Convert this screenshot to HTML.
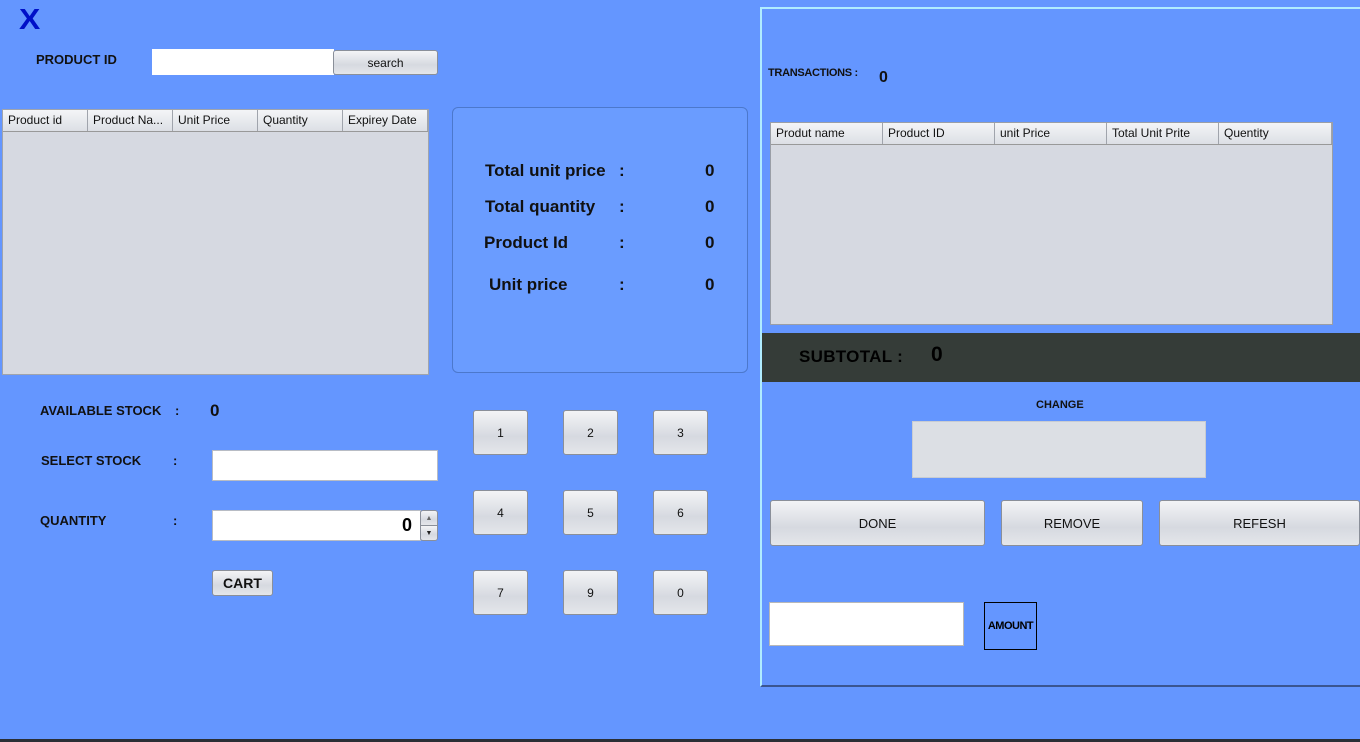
<!DOCTYPE html><html><head><style>
body{margin:0;width:1360px;height:742px;background:#6496ff;position:relative;overflow:hidden;font-family:"Liberation Sans",Arial,sans-serif;}
.a{position:absolute}
.b{font-weight:bold;color:#111}
.btn{position:absolute;border:1px solid #8a8f99;border-radius:3px;background:linear-gradient(#f3f4f6,#d6d9e0 60%,#e4e6ea);box-sizing:border-box;display:flex;align-items:center;justify-content:center;font-size:12px;color:#111}
.tf{position:absolute;background:#fff;border:1px solid #b8bcc4;box-sizing:border-box}
.hdr{position:absolute;display:flex;background:linear-gradient(#f4f5f7,#dcdfe5);border-bottom:1px solid #999;box-sizing:border-box}
.hdr div{border-right:1px solid #a0a4ac;box-sizing:border-box;font-size:12px;padding:3px 0 0 5px;white-space:nowrap;overflow:hidden;color:#111}
</style></head><body>
<div class="a" style="left:19px;top:4px;font-size:29px;font-weight:900;color:#0010c8;transform:scaleX(1.1);transform-origin:left">X</div>
<div class="a b" style="left:36px;top:52px;font-size:13px">PRODUCT ID</div>
<div class="tf" style="left:152px;top:49px;width:182px;height:26px;border:none"></div>
<div class="btn" style="left:333px;top:50px;width:105px;height:25px">search</div>

<div class="a" style="left:2px;top:109px;width:427px;height:266px;background:#d6d9e1;border:1px solid #a0a4ac;box-sizing:border-box"></div>
<div class="hdr" style="left:3px;top:110px;width:425px;height:22px">
<div style="width:85px">Product id</div><div style="width:85px">Product Na...</div><div style="width:85px">Unit Price</div><div style="width:85px">Quantity</div><div style="width:85px">Expirey Date</div></div>

<div class="a" style="left:452px;top:107px;width:296px;height:266px;background:#6a9cff;border:1px solid #4c78cc;border-radius:6px;box-sizing:border-box"></div>
<div class="a b" style="left:485px;top:161px;font-size:17px">Total unit price</div>
<div class="a b" style="left:485px;top:197px;font-size:17px">Total quantity</div>
<div class="a b" style="left:484px;top:233px;font-size:17px">Product Id</div>
<div class="a b" style="left:489px;top:275px;font-size:17px">Unit price</div>
<div class="a b" style="left:619px;top:161px;font-size:17px">:</div>
<div class="a b" style="left:619px;top:197px;font-size:17px">:</div>
<div class="a b" style="left:619px;top:233px;font-size:17px">:</div>
<div class="a b" style="left:619px;top:275px;font-size:17px">:</div>
<div class="a b" style="left:705px;top:161px;font-size:17px">0</div>
<div class="a b" style="left:705px;top:197px;font-size:17px">0</div>
<div class="a b" style="left:705px;top:233px;font-size:17px">0</div>
<div class="a b" style="left:705px;top:275px;font-size:17px">0</div>

<div class="a b" style="left:40px;top:403px;font-size:13px">AVAILABLE STOCK</div>
<div class="a b" style="left:175px;top:403px;font-size:13px">:</div>
<div class="a b" style="left:210px;top:401px;font-size:17px">0</div>
<div class="a b" style="left:41px;top:453px;font-size:13px">SELECT STOCK</div>
<div class="a b" style="left:173px;top:453px;font-size:13px">:</div>
<div class="a b" style="left:40px;top:513px;font-size:13px">QUANTITY</div>
<div class="a b" style="left:173px;top:513px;font-size:13px">:</div>
<div class="tf" style="left:212px;top:450px;width:226px;height:31px"></div>
<div class="tf" style="left:212px;top:510px;width:209px;height:31px"><span class="a b" style="right:8px;top:4px;font-size:18px;color:#000">0</span></div>
<div class="btn" style="left:420px;top:510px;width:18px;height:16px;font-size:7px;color:#666;border-radius:3px 3px 0 0">▲</div>
<div class="btn" style="left:420px;top:525px;width:18px;height:16px;font-size:7px;color:#222;border-radius:0 0 3px 3px">▼</div>
<div class="btn b" style="left:212px;top:570px;width:61px;height:26px;font-size:14px;font-weight:bold">CART</div>

<div class="btn" style="left:473px;top:410px;width:55px;height:45px">1</div>
<div class="btn" style="left:563px;top:410px;width:55px;height:45px">2</div>
<div class="btn" style="left:653px;top:410px;width:55px;height:45px">3</div>
<div class="btn" style="left:473px;top:490px;width:55px;height:45px">4</div>
<div class="btn" style="left:563px;top:490px;width:55px;height:45px">5</div>
<div class="btn" style="left:653px;top:490px;width:55px;height:45px">6</div>
<div class="btn" style="left:473px;top:570px;width:55px;height:45px">7</div>
<div class="btn" style="left:563px;top:570px;width:55px;height:45px">9</div>
<div class="btn" style="left:653px;top:570px;width:55px;height:45px">0</div>

<div class="a" style="left:760px;top:7px;width:602px;height:680px;border-top:2px solid #b0ecff;border-left:2px solid #b0ecff;border-bottom:2px solid #3a5590;box-sizing:border-box"></div>
<div class="a b" style="left:768px;top:67px;font-size:11px;letter-spacing:-0.3px">TRANSACTIONS :</div>
<div class="a b" style="left:879px;top:69px;font-size:16px">0</div>
<div class="a" style="left:770px;top:122px;width:563px;height:203px;background:#d6d9e1;border:1px solid #9a9ea6;box-sizing:border-box"></div>
<div class="hdr" style="left:771px;top:123px;width:561px;height:22px">
<div style="width:112px">Produt name</div><div style="width:112px">Product ID</div><div style="width:112px">unit Price</div><div style="width:112px">Total Unit Prite</div><div style="width:113px">Quentity</div></div>
<div class="a" style="left:762px;top:333px;width:598px;height:49px;background:#353c38"></div>
<div class="a b" style="left:799px;top:347px;font-size:17px;color:#000;letter-spacing:0.3px">SUBTOTAL :</div>
<div class="a b" style="left:931px;top:343px;font-size:21px;color:#000">0</div>
<div class="a b" style="left:1036px;top:399px;font-size:11px">CHANGE</div>
<div class="a" style="left:912px;top:421px;width:294px;height:57px;background:#dcdfe4;border:1px solid #c8ccd2;box-sizing:border-box"></div>
<div class="btn" style="left:770px;top:500px;width:215px;height:46px;font-size:13px">DONE</div>
<div class="btn" style="left:1001px;top:500px;width:142px;height:46px;font-size:13px">REMOVE</div>
<div class="btn" style="left:1159px;top:500px;width:201px;height:46px;font-size:13px">REFESH</div>
<div class="tf" style="left:769px;top:602px;width:195px;height:44px;border:1px solid #b8b8b8"></div>
<div class="a" style="left:984px;top:602px;width:53px;height:48px;border:1px solid #000;box-sizing:border-box;display:flex;align-items:center;justify-content:center;font-size:11px;font-weight:bold;letter-spacing:-0.5px">AMOUNT</div>
<div class="a" style="left:0;top:739px;width:1360px;height:3px;background:#2a2e35"></div>
</body></html>
